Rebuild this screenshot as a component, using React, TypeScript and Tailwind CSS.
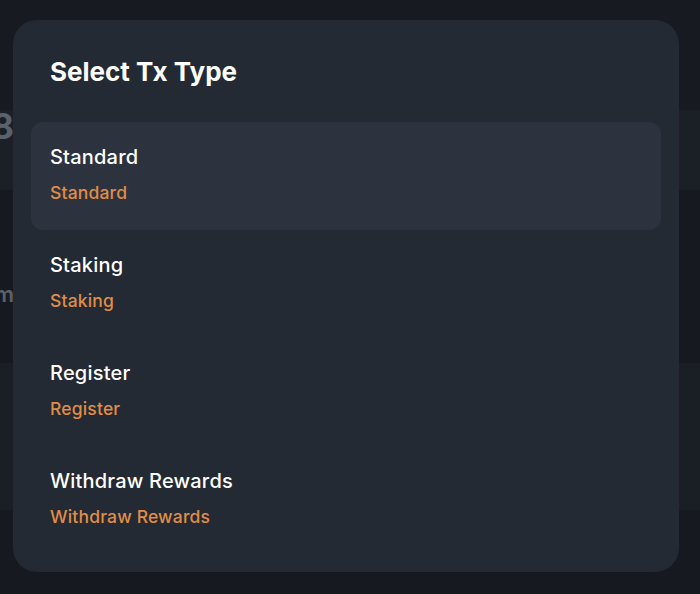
import React from "react";

const txTypes = [
  { name: "Standard", value: "Standard" },
  { name: "Staking", value: "Staking" },
  { name: "Register", value: "Register" },
  { name: "Withdraw Rewards", value: "Withdraw Rewards" },
];

const App = () => {
  const selected = "Standard";

  return (
    <div
      className="relative h-[594px] w-[700px] overflow-hidden bg-[#16191f]"
      style={{ fontFamily: "Inter, 'Noto Sans', sans-serif" }}
    >
      {/* page behind the dialog */}
      <div className="flex flex-col">
        <div className="h-[110px] bg-[#171a21]" />
        <div className="flex h-[80px] items-start bg-[#1b1f26]">
          <div className="flex w-[14px] justify-end whitespace-nowrap text-[35px] font-bold leading-[32px] text-[#5c6068]">
            1,248
          </div>
        </div>
        <div className="flex h-[173px] items-start bg-[#16191f] pt-[90px]">
          <div className="flex w-[14px] justify-end whitespace-nowrap text-[22px] font-semibold leading-[28px] text-[#5c6068]">
            Sum
          </div>
        </div>
        <div className="h-[147px] bg-[#1a1e25]" />
        <div className="h-[84px] bg-[#16191f]" />
      </div>

      {/* dialog */}
      <div className="absolute left-[13px] top-[20px] flex h-[552px] w-[666px] flex-col rounded-[24px] bg-[#232a34] px-[18px] pb-[18px] pt-[36px]">
        <h2 className="pl-[19px] text-[26px] font-bold leading-[32px] text-white">
          Select Tx Type
        </h2>
        <ul className="mt-[34px] flex flex-col">
          {txTypes.map((t) => (
            <li
              key={t.value}
              className={
                "flex h-[108px] flex-col rounded-[12px] px-[19px] pt-[22px] " +
                (t.value === selected ? "bg-[#2c333e]" : "")
              }
            >
              <span className="text-[20px] font-medium leading-[26px] tracking-[0.01em] text-white">
                {t.name}
              </span>
              <span className="mt-[11px] text-[17.5px] font-medium leading-[24px] tracking-[0.01em] text-[#e08d47]">
                {t.value}
              </span>
            </li>
          ))}
        </ul>
      </div>
    </div>
  );
};

export default App;
